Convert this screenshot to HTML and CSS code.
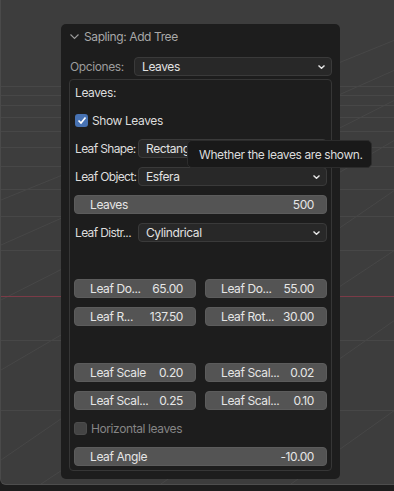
FILE: index.html
```html
<!DOCTYPE html>
<html>
<head>
<meta charset="utf-8">
<link rel="stylesheet" href="styles.css">
</head>
<body>
<div class="viewport">
  <svg class="grid" width="394" height="484" viewBox="0 0 394 484">
    <g stroke="#474747" stroke-width="1" fill="none">
      <line x1="0" y1="86.5" x2="394" y2="86.5"/>
      <line x1="0" y1="95.5" x2="394" y2="95.5"/>
      <line x1="0" y1="105.5" x2="394" y2="105.5"/>
      <line x1="0" y1="117.5" x2="394" y2="117.5"/>
      <line x1="0" y1="131.5" x2="394" y2="131.5"/>
      <line x1="0" y1="147.5" x2="394" y2="147.5"/>
      <line x1="0" y1="166.5" x2="394" y2="166.5"/>
      <line x1="0" y1="189.5" x2="394" y2="189.5"/>
      <line x1="0" y1="216.5" x2="394" y2="216.5"/>
      <line x1="0" y1="250.5" x2="394" y2="250.5"/>
      <line x1="0" y1="340.5" x2="394" y2="340.5"/>
      <line x1="0" y1="410.5" x2="394" y2="410.5"/>
      <line x1="0" y1="200" x2="394" y2="40"/>
      <line x1="0" y1="245" x2="394" y2="70"/>
      <line x1="0" y1="300" x2="394" y2="100"/>
      <line x1="0" y1="370" x2="394" y2="140"/>
      <line x1="0" y1="460" x2="394" y2="190"/>
      <line x1="40" y1="484" x2="394" y2="250"/>
      <line x1="160" y1="484" x2="394" y2="320"/>
      <line x1="290" y1="484" x2="394" y2="410"/>
    </g>
    <line x1="0" y1="296.5" x2="394" y2="296.5" stroke="#7b3b47" stroke-width="1"/>
  </svg>

  <div class="panel">
    <div class="panel-header">
      <svg class="hdr-chev" width="9" height="6" viewBox="0 0 9 6"><path d="M0.5 0.5 L4.5 4.5 L8.5 0.5" stroke="#9a9a9a" stroke-width="1.1" fill="none"/></svg>
      <span>Sapling: Add Tree</span>
    </div>
    <div class="opt-row">
      <span class="opt-label">Opciones:</span>
      <div class="dropdown"><span>Leaves</span><svg class="chev" width="7" height="4" viewBox="0 0 7 4"><path d="M0.5 0.5 L3.5 3.3 L6.5 0.5" stroke="#e6e6e6" stroke-width="1.4" fill="none"/></svg></div>
    </div>
    <div class="box">
      <div class="row"><span class="text">Leaves:</span></div>
      <div class="row"><span class="check on"><svg width="10" height="9" viewBox="0 0 10 9"><path d="M1.5 4.5 L4 7 L8.5 1.5" stroke="#fff" stroke-width="1.7" fill="none"/></svg></span><span class="text">Show Leaves</span></div>
      <div class="row"><span class="plabel">Leaf Shape:</span><div class="dropdown"><span>Rectangular</span><svg class="chev" width="7" height="4" viewBox="0 0 7 4"><path d="M0.5 0.5 L3.5 3.3 L6.5 0.5" stroke="#e6e6e6" stroke-width="1.4" fill="none"/></svg></div></div>
      <div class="row"><span class="plabel">Leaf Object:</span><div class="dropdown"><span>Esfera</span><svg class="chev" width="7" height="4" viewBox="0 0 7 4"><path d="M0.5 0.5 L3.5 3.3 L6.5 0.5" stroke="#e6e6e6" stroke-width="1.4" fill="none"/></svg></div></div>
      <div class="row"><div class="slider"><span>Leaves</span><span>500</span></div></div>
      <div class="row"><span class="plabel">Leaf Distr...</span><div class="dropdown"><span>Cylindrical</span><svg class="chev" width="7" height="4" viewBox="0 0 7 4"><path d="M0.5 0.5 L3.5 3.3 L6.5 0.5" stroke="#e6e6e6" stroke-width="1.4" fill="none"/></svg></div></div>
      <div class="row"></div>
      <div class="row two"><div class="slider"><span>Leaf Do...</span><span>65.00</span></div><div class="slider"><span>Leaf Do...</span><span>55.00</span></div></div>
      <div class="row two"><div class="slider"><span>Leaf R...</span><span>137.50</span></div><div class="slider"><span>Leaf Rot...</span><span>30.00</span></div></div>
      <div class="row"></div>
      <div class="row two"><div class="slider"><span>Leaf Scale</span><span>0.20</span></div><div class="slider"><span>Leaf Scal...</span><span>0.02</span></div></div>
      <div class="row two"><div class="slider"><span>Leaf Scal...</span><span>0.25</span></div><div class="slider"><span>Leaf Scal...</span><span>0.10</span></div></div>
      <div class="row"><span class="check off"></span><span class="text dim">Horizontal leaves</span></div>
      <div class="row"><div class="slider"><span>Leaf Angle</span><span>-10.00</span></div></div>
    </div>
  </div>

  <div class="tooltip">Whether the leaves are shown.</div>
</div>
</body>
</html>
```

FILE: styles.css
```css
* { box-sizing: border-box; }
html, body {
  margin: 0;
  padding: 0;
  width: 394px;
  height: 491px;
  overflow: hidden;
  background: #1d1d1d;
  font-family: Inter, "DejaVu Sans", sans-serif;
  font-size: 12px;
  letter-spacing: -0.4px;
}
.viewport {
  position: relative;
  width: 394px;
  height: 485px;
  background: #3d3d3d;
  border-left: 1px solid #4a4a4a;
  border-bottom: 1px solid #4e4e4e;
  border-bottom-left-radius: 6px;
  overflow: hidden;
}
.grid {
  position: absolute;
  left: 0;
  top: 0;
}
.panel {
  position: absolute;
  left: 60px;
  top: 24px;
  width: 279px;
  height: 455px;
  background: #1d1d1d;
  border-radius: 5px;
  padding: 0 8px 8px;
  display: flex;
  flex-direction: column;
}
.panel-header {
  height: 25px;
  display: flex;
  align-items: center;
  gap: 5px;
  padding-left: 1px;
  color: #a8a8a8;
}
.hdr-chev { margin-top: 1px; }
.opt-row {
  margin-top: 8px;
  height: 19px;
  display: flex;
  align-items: center;
}
.opt-label {
  flex: none;
  width: 65px;
  padding-left: 1px;
  color: #9c9c9c;
}
.dropdown {
  flex: 1;
  min-width: 0;
  height: 19px;
  background: #282828;
  border: 1px solid #3a3a3a;
  border-radius: 4px;
  display: flex;
  align-items: center;
  justify-content: space-between;
  padding: 0 6px 0 7px;
  color: #e2e2e2;
  white-space: nowrap;
}
.box {
  margin-top: 3px;
  border: 1px solid #363636;
  border-radius: 4px;
  padding: 3px 4px 4px;
  display: flex;
  flex-direction: column;
  gap: 9px;
}
.row {
  height: 19px;
  display: flex;
  align-items: center;
}
.row.two { gap: 9px; }
.text {
  color: #dcdcdc;
  padding-left: 1px;
  white-space: nowrap;
}
.text.dim { color: #858585; padding-left: 4px; }
.check {
  flex: none;
  width: 13px;
  height: 13px;
  border-radius: 3px;
  display: flex;
  align-items: center;
  justify-content: center;
}
.check.on {
  background: #4772b3;
  margin-left: 1px;
  margin-right: 3px;
}
.check.off {
  background: #444444;
  border: 1px solid #4c4c4c;
}
.plabel {
  flex: none;
  width: 64px;
  padding-left: 1px;
  color: #dcdcdc;
  white-space: nowrap;
  overflow: hidden;
  letter-spacing: -0.65px;
}
.slider {
  flex: 1 1 0;
  min-width: 0;
  height: 19px;
  background: #545454;
  border: 1px solid #5c5c5c;
  border-radius: 4px;
  display: flex;
  align-items: center;
  justify-content: space-between;
  padding: 0 12px 0 15px;
  color: #e6e6e6;
  white-space: nowrap;
}
.tooltip {
  position: absolute;
  left: 186px;
  top: 140px;
  width: 185px;
  height: 28px;
  background: #191919;
  border: 1px solid #2c2c2c;
  border-radius: 5px;
  color: #dcdcdc;
  display: flex;
  align-items: center;
  padding-left: 11px;
  white-space: nowrap;
}
```
